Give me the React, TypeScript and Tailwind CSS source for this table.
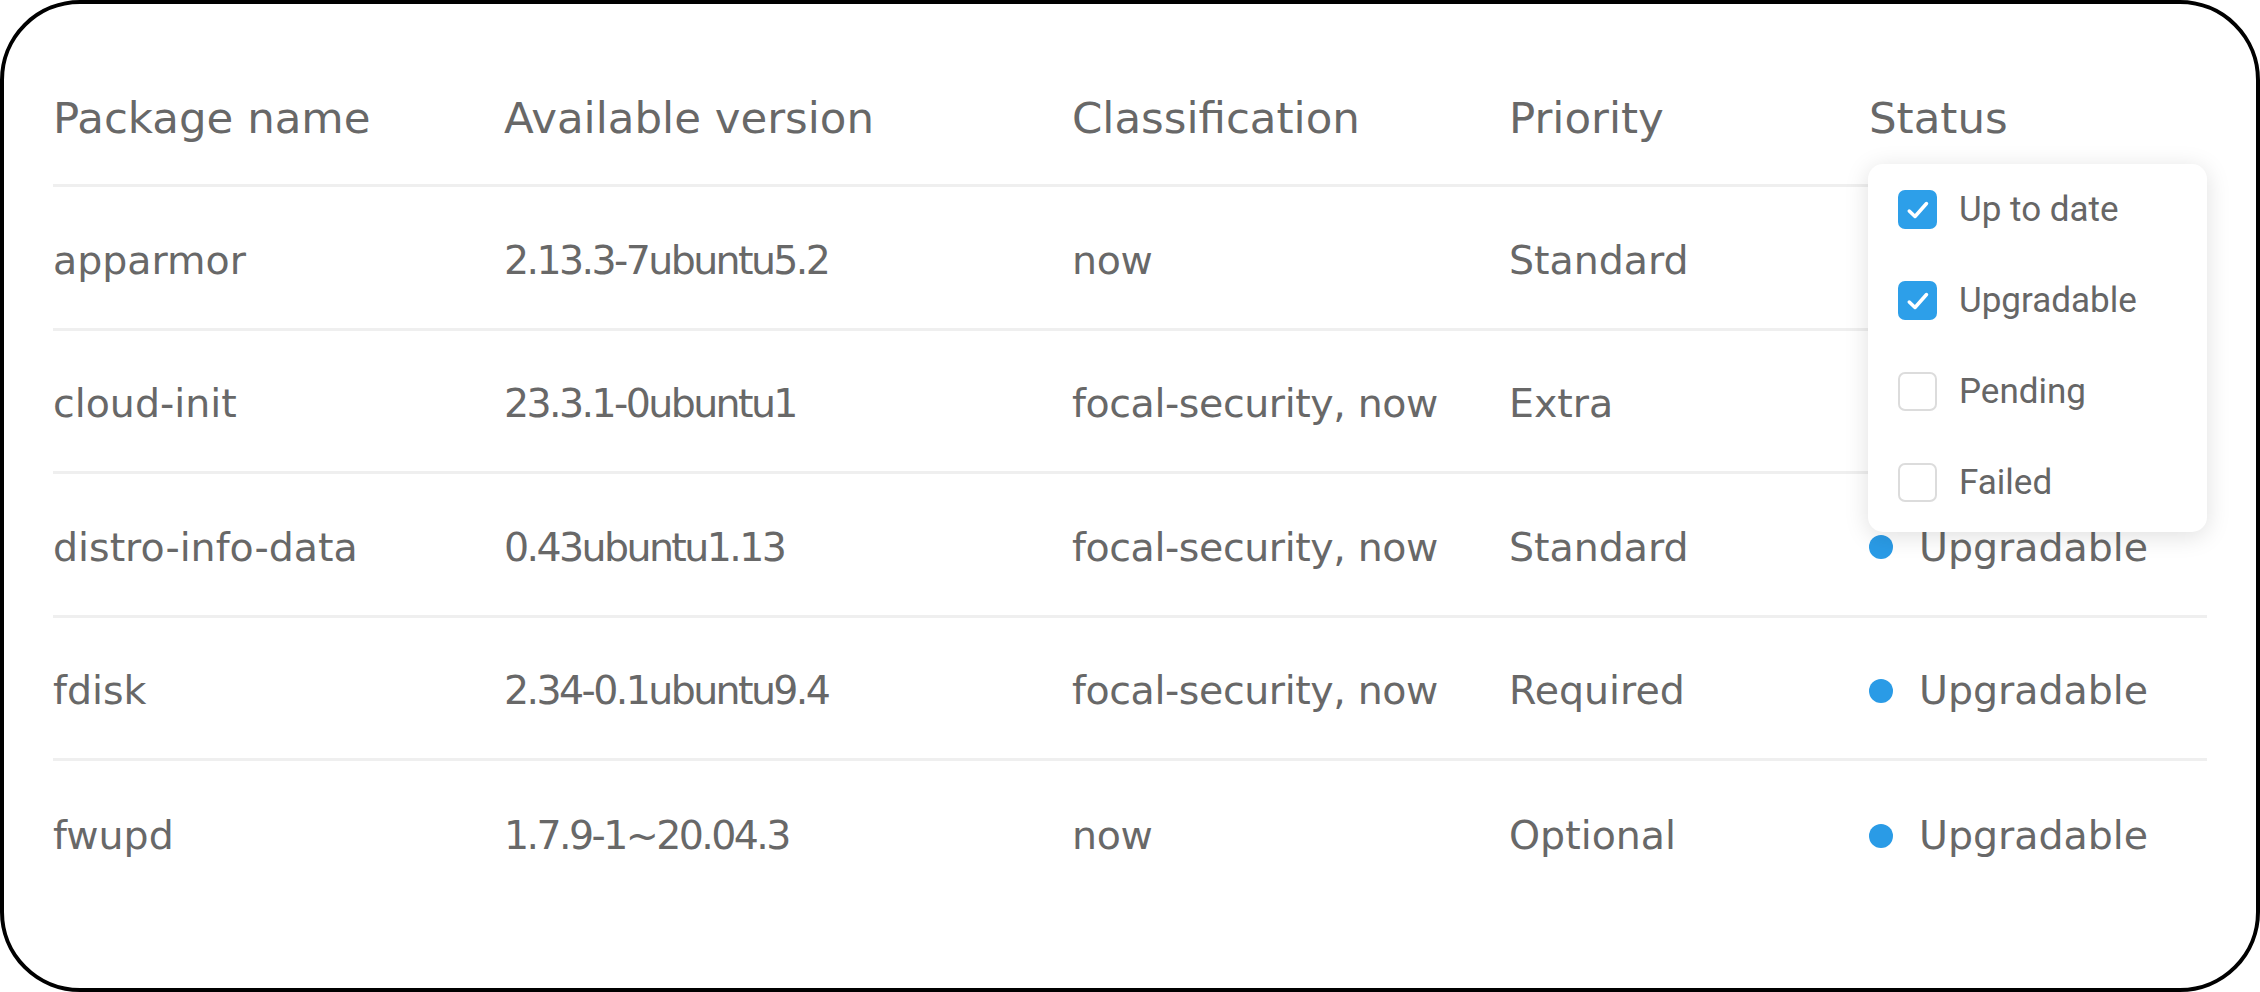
import React from "react";

type Row = {
  name: string;
  version: string;
  cls: string;
  priority: string;
  status: string | null;
};

const rows: Row[] = [
  { name: "apparmor", version: "2.13.3-7ubuntu5.2", cls: "now", priority: "Standard", status: null },
  { name: "cloud-init", version: "23.3.1-0ubuntu1", cls: "focal-security, now", priority: "Extra", status: null },
  { name: "distro-info-data", version: "0.43ubuntu1.13", cls: "focal-security, now", priority: "Standard", status: "Upgradable" },
  { name: "fdisk", version: "2.34-0.1ubuntu9.4", cls: "focal-security, now", priority: "Required", status: "Upgradable" },
  { name: "fwupd", version: "1.7.9-1~20.04.3", cls: "now", priority: "Optional", status: "Upgradable" },
];

const filters = [
  { label: "Up to date", checked: true },
  { label: "Upgradable", checked: true },
  { label: "Pending", checked: false },
  { label: "Failed", checked: false },
];

const gridCols = "grid grid-cols-[451px_568px_437px_360px_338px]";

function Check({ checked }: { checked: boolean }) {
  if (checked) {
    return (
      <div className="w-[39px] h-[39px] rounded-[7px] bg-[#2d9fe9] flex items-center justify-center">
        <svg width="30" height="30" viewBox="0 0 24 24" fill="none">
          <path d="M5 12.8 L9.6 17.2 L18.8 6.8" stroke="white" strokeWidth="2.8" strokeLinecap="round" strokeLinejoin="round" />
        </svg>
      </div>
    );
  }
  return <div className="w-[39px] h-[39px] rounded-[7px] border-[2px] border-[#dcdcdc] bg-white" />;
}

export default function App() {
  return (
    <div className="w-[2260px] h-[992px] bg-white">
      <div className="relative w-full h-full border-[4px] border-black rounded-[80px] bg-white overflow-hidden px-[49px] pt-[39px] text-[#686868] font-['DejaVu_Sans',sans-serif]">
        <div className={`${gridCols} h-[144px] pt-[10px] items-center text-[43.5px] leading-none border-b-[3px] border-[#efefef]`}>
          <div>Package name</div>
          <div>Available version</div>
          <div>Classification</div>
          <div>Priority</div>
          <div>Status</div>
        </div>
        {rows.map((r, i) => (
          <div
            key={r.name}
            className={`${gridCols} h-[143.5px] pt-[6px] items-center text-[39.5px] leading-none ${i < rows.length - 1 ? "border-b-[3px] border-[#efefef]" : ""}`}
          >
            <div>{r.name}</div>
            <div className="tracking-[-2.6px]">{r.version}</div>
            <div className="tracking-[-0.4px]">{r.cls}</div>
            <div>{r.priority}</div>
            <div className="flex items-center gap-[26px]">
              {r.status && (
                <>
                  <span className="w-[24px] h-[24px] rounded-full bg-[#2a9be6]" />
                  <span>{r.status}</span>
                </>
              )}
            </div>
          </div>
        ))}

        <div className="absolute left-[1864px] top-[160px] w-[339px] h-[368px] rounded-[15px] bg-white shadow-[0_4px_24px_rgba(0,0,0,0.13)] flex flex-col font-['Roboto',sans-serif] text-[35px] text-[#666666]">
          {filters.map((f) => (
            <div key={f.label} className="h-[91px] flex items-center pl-[30px] gap-[22px]">
              <Check checked={f.checked} />
              <span className="leading-none">{f.label}</span>
            </div>
          ))}
        </div>
      </div>
    </div>
  );
}
